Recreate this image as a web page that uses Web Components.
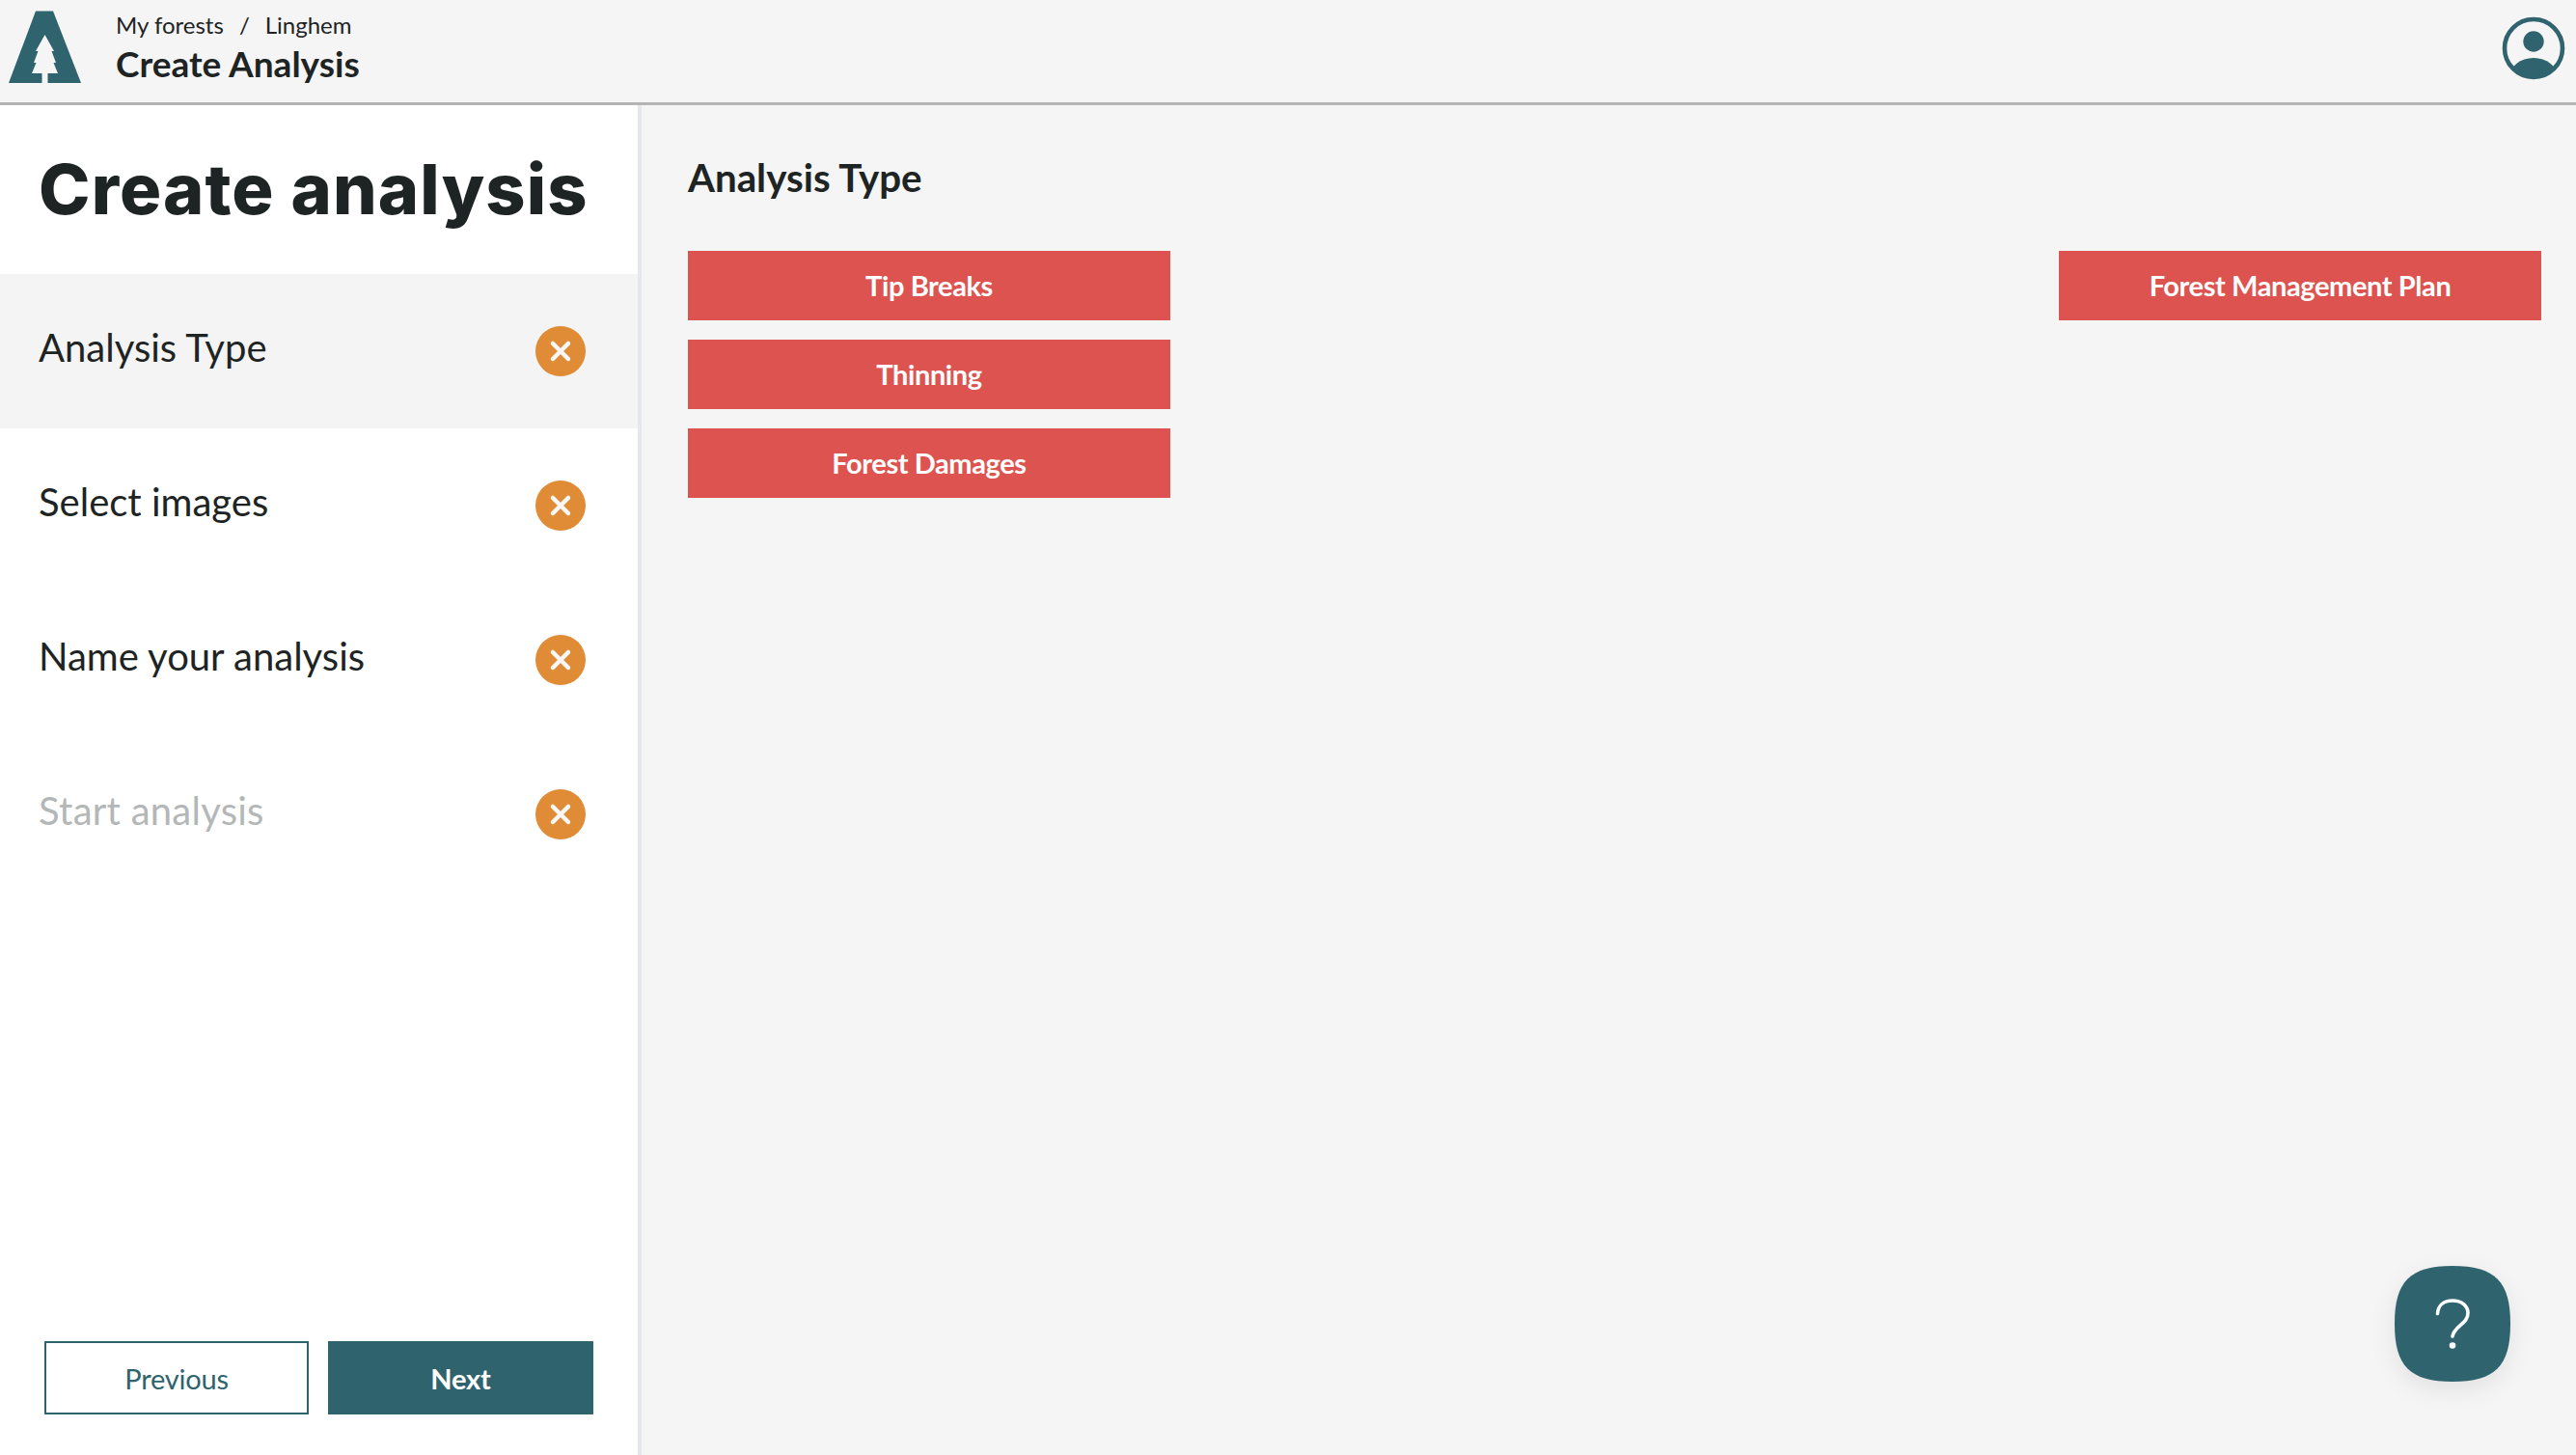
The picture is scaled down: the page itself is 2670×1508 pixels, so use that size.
<!DOCTYPE html>
<html lang="en">
<head>
<meta charset="utf-8">
<title>Create analysis</title>
<style>
  html, body { margin: 0; height: 100%; }
  body { font-family: "Lato", "Liberation Sans", sans-serif; color: #1e2424; background: #f5f5f5; }
</style>
</head>
<body>
<app-shell>
  <app-header slot="header" crumbs="My forests,Linghem" title="Create Analysis"></app-header>
  <step-sidebar slot="sidebar" heading="Create analysis">
    <step-row active>Analysis Type</step-row>
    <step-row>Select images</step-row>
    <step-row>Name your analysis</step-row>
    <step-row disabled>Start analysis</step-row>
    <nav-button slot="actions" outlined>Previous</nav-button>
    <nav-button slot="actions">Next</nav-button>
  </step-sidebar>
  <analysis-panel slot="main" heading="Analysis Type">
    <type-button>Tip Breaks</type-button>
    <type-button>Thinning</type-button>
    <type-button>Forest Damages</type-button>
    <type-button slot="side">Forest Management Plan</type-button>
  </analysis-panel>
  <help-button slot="overlay"></help-button>
</app-shell>

<script>
class AppShell extends HTMLElement {
  connectedCallback() {
    if (this.shadowRoot) return;
    this.attachShadow({ mode: "open" }).innerHTML = `
      <style>
        :host {
          display: grid;
          grid-template-columns: 665px 1fr;
          grid-template-rows: 109px 1fr;
          width: 100%;
          height: 100vh;
          position: relative;
          overflow: hidden;
        }
        .top { grid-column: 1 / -1; }
        .top, .left, .right { display: grid; min-height: 0; }
      </style>
      <div class="top"><slot name="header"></slot></div>
      <div class="left"><slot name="sidebar"></slot></div>
      <div class="right"><slot name="main"></slot></div>
      <slot name="overlay"></slot>
    `;
  }
}

class AppHeader extends HTMLElement {
  connectedCallback() {
    if (this.shadowRoot) return;
    const crumbs = this.getAttribute("crumbs").split(",");
    this.attachShadow({ mode: "open" }).innerHTML = `
      <style>
        :host {
          display: flex;
          align-items: center;
          background: #f5f5f5;
          border-bottom: 3px solid #b4b4b4;
          box-sizing: border-box;
          padding: 0 11px 0 9px;
        }
        .logo { width: 75px; height: 75px; flex: none; margin-top: -10px; }
        .titles { margin-left: 36px; flex: 1; margin-top: -7px; }
        .crumbs { font-size: 24px; line-height: 30px; display: flex; gap: 16px; color: #1e2424; position: relative; top: -1px; }
        .title { font-size: 37px; font-weight: 700; line-height: 44px; margin-top: 2px; }
        .user { width: 66px; height: 66px; flex: none; margin-top: -6px; }
      </style>
      <svg class="logo" viewBox="9 11 75 75" aria-hidden="true">
        <path fill="#2f636e" d="M37 11.500h18L84 86H9z"/>
        <path fill="#f5f5f5" d="M46.500 36L37 53h2.500L35 65h2.500L33 76h10.500v10h6V76H60l-4.500-11H58l-4.500-12H56z"/>
      </svg>
      <div class="titles">
        <div class="crumbs"><span>${crumbs[0]}</span><span>/</span><span>${crumbs[1]}</span></div>
        <div class="title">${this.getAttribute("title")}</div>
      </div>
      <svg class="user" viewBox="0 0 66 66" aria-hidden="true">
        <defs><clipPath id="disc"><circle cx="33" cy="33" r="30"/></clipPath></defs>
        <circle cx="33" cy="33" r="30" fill="none" stroke="#2f636e" stroke-width="4.600"/>
        <circle cx="33" cy="26" r="10.700" fill="#2f636e"/>
        <ellipse cx="33" cy="63" rx="24.600" ry="20" fill="#2f636e" clip-path="url(#disc)"/>
      </svg>
    `;
  }
}

class StepSidebar extends HTMLElement {
  connectedCallback() {
    if (this.shadowRoot) return;
    this.attachShadow({ mode: "open" }).innerHTML = `
      <style>
        :host {
          display: flex;
          flex-direction: column;
          background: #fff;
          border-right: 4px solid #e6e7ea;
          box-sizing: border-box;
          min-height: 0;
        }
        h1 {
          font-family: "Inter", "Liberation Sans", sans-serif;
          font-size: 72px;
          font-weight: 800;
          line-height: 173px;
          height: 175px;
          margin: 0;
          padding-left: 40px;
          white-space: nowrap;
          color: #1e2424;
          letter-spacing: 1.1px;
        }
        .steps { flex: 1; display: flex; flex-direction: column; }
        .actions {
          display: grid;
          grid-template-columns: 274px 275px;
          gap: 20px;
          padding: 0 0 42px 46px;
        }
      </style>
      <h1>${this.getAttribute("heading")}</h1>
      <div class="steps"><slot></slot></div>
      <div class="actions"><slot name="actions"></slot></div>
    `;
  }
}

class StepRow extends HTMLElement {
  connectedCallback() {
    if (this.shadowRoot) return;
    this.attachShadow({ mode: "open" }).innerHTML = `
      <style>
        :host {
          display: flex;
          align-items: center;
          justify-content: space-between;
          height: 160px;
          padding: 0 54px 0 40px;
          font-size: 40px;
          color: #1e2424;
        }
        :host([active]) { background: #f4f4f4; }
        :host([disabled]) { color: #b4b7b7; letter-spacing: 0.25px; }
        span { margin-top: -8px; }
        svg { width: 52px; height: 52px; flex: none; }
      </style>
      <span><slot></slot></span>
      <svg viewBox="0 0 52 52" aria-hidden="true">
        <circle cx="26" cy="26" r="26" fill="#e08b35"/>
        <path d="M18 18l16 16M34 18L18 34" stroke="#f8f8f8" stroke-width="4.500" stroke-linecap="round"/>
      </svg>
    `;
  }
}

class NavButton extends HTMLElement {
  connectedCallback() {
    if (this.shadowRoot) return;
    this.attachShadow({ mode: "open" }).innerHTML = `
      <style>
        :host {
          display: flex;
          align-items: center;
          justify-content: center;
          height: 76px;
          box-sizing: border-box;
          background: #2f636e;
          border: 2px solid #2f636e;
          color: #fff;
          font-size: 29px;
          font-weight: 700;
          letter-spacing: -0.2px;
        }
        :host([outlined]) { background: #fff; color: #2f636e; font-weight: 400; }
      </style>
      <slot></slot>
    `;
  }
}

class AnalysisPanel extends HTMLElement {
  connectedCallback() {
    if (this.shadowRoot) return;
    this.attachShadow({ mode: "open" }).innerHTML = `
      <style>
        :host {
          display: block;
          padding: 51px 36px 0 48px;
          box-sizing: border-box;
        }
        h2 {
          font-size: 40.300px;
          font-weight: 700;
          line-height: 48px;
          margin: 0 0 52px;
          color: #1e2424;
        }
        .types { display: flex; justify-content: space-between; align-items: flex-start; }
        .col { display: flex; flex-direction: column; gap: 20px; width: 500px; }
      </style>
      <h2>${this.getAttribute("heading")}</h2>
      <div class="types">
        <div class="col"><slot></slot></div>
        <div class="col"><slot name="side"></slot></div>
      </div>
    `;
  }
}

class TypeButton extends HTMLElement {
  connectedCallback() {
    if (this.shadowRoot) return;
    this.attachShadow({ mode: "open" }).innerHTML = `
      <style>
        :host {
          display: flex;
          align-items: center;
          justify-content: center;
          height: 72px;
          box-sizing: border-box;
          padding-bottom: 2px;
          background: #dd5350;
          color: #fff;
          font-size: 29px;
          font-weight: 700;
          letter-spacing: -0.4px;
        }
      </style>
      <slot></slot>
    `;
  }
}

class HelpButton extends HTMLElement {
  connectedCallback() {
    if (this.shadowRoot) return;
    this.attachShadow({ mode: "open" }).innerHTML = `
      <style>
        :host {
          /* floats over the page corner */
          position: absolute;
          right: 68px;
          bottom: 76px;
          width: 120px;
          height: 120px;
          display: block;
          filter: drop-shadow(0 8px 12px rgba(0, 0, 0, 0.08));
        }
        svg { display: block; width: 120px; height: 120px; }
      </style>
      <svg viewBox="0 0 120 120" role="img" aria-label="Help">
        <path fill="#2f636e" d="M60 0C104 0 120 16 120 60S104 120 60 120 0 104 0 60 16 0 60 0z"/>
        <path fill="none" stroke="#fff" stroke-width="3.600" stroke-linecap="round" d="M44.500 49.500C45 41 51 36 60 36c9.500 0 16 5.500 16 13 0 11-14 13-16 24"/>
        <circle cx="60" cy="82.500" r="3.300" fill="#fff"/>
      </svg>
    `;
  }
}

customElements.define("app-shell", AppShell);
customElements.define("app-header", AppHeader);
customElements.define("step-sidebar", StepSidebar);
customElements.define("step-row", StepRow);
customElements.define("nav-button", NavButton);
customElements.define("analysis-panel", AnalysisPanel);
customElements.define("type-button", TypeButton);
customElements.define("help-button", HelpButton);
</script>
</body>
</html>
